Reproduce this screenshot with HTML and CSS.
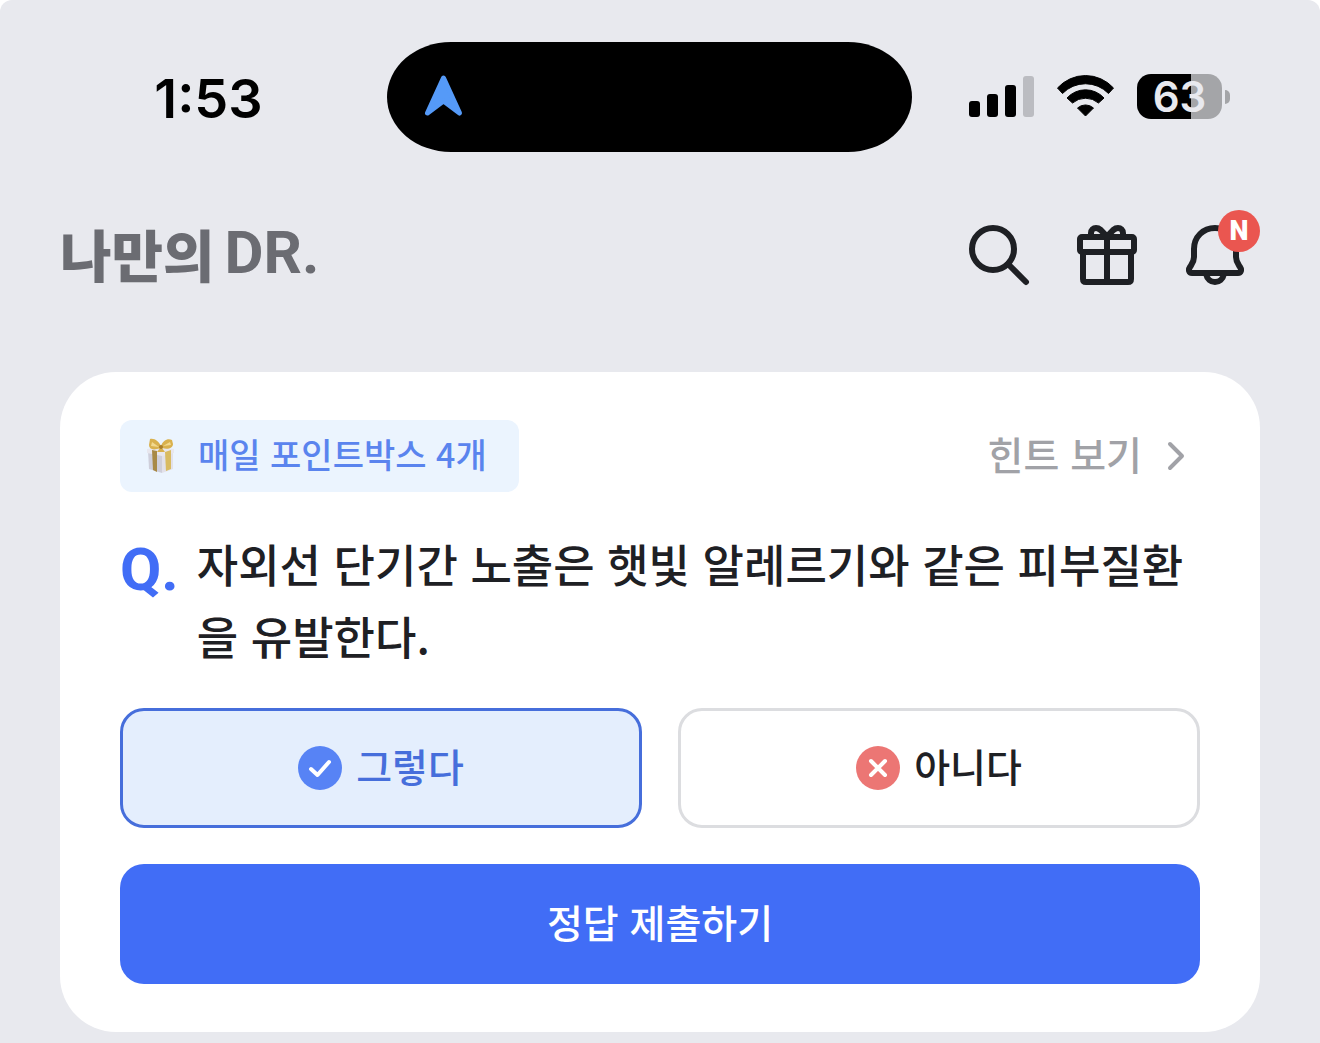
FILE: index.html
```html
<!doctype html>
<html lang="ko">
    <head>
        <meta charset="utf-8" />
        <meta name="viewport" content="width=device-width, initial-scale=1" />
        <title>나만의DR.</title>
        <link rel="stylesheet" href="styles.css">
    </head>
    <body>
        <div class="screen">
            <div class="status-bar">
                <time class="clock">1:53</time>
                <div class="island">
                    <svg width="40" height="44" viewBox="0 0 40 44">
                        <path d="M20.500 4 L4.500 39 L20.500 27 L36.500 39 Z" fill="#559af8" stroke="#559af8" stroke-width="5" stroke-linejoin="round" />
                        <path d="M13 42 L20.500 32 L28 42 Z" fill="#000" />
                    </svg>
                </div>
                <div class="status-icons">
                    <svg width="65" height="45" viewBox="0 0 65 45">
                        <rect x="0" y="27" width="11" height="16" rx="3" />
                        <rect x="18" y="20" width="11" height="23" rx="3" />
                        <rect x="36" y="11" width="11" height="32" rx="3" />
                        <rect x="54" y="2" width="11" height="41" rx="3" fill="#bbbcc1" />
                    </svg>
                    <svg width="57" height="45" viewBox="0 0 57 45">
                        <g stroke="#000" stroke-linejoin="round">
                            <path d="M.5 14 A37.7 37.7 0 0 1 56.5 14 L51.5 19.5 A32 32 0 0 0 5.5 19.5 Z" />
                            <path d="M10 24 A25 25 0 0 1 47 24 L41.5 29 A20 20 0 0 0 15.5 29 Z" />
                            <path d="M20.5 34 A12 12 0 0 1 36.5 34 L28.5 42 Z" />
                        </g>
                    </svg>
                    <span class="battery">63</span>
                </div>
            </div>

            <header class="app-bar">
                <a class="logo" href="#"><span>나만의</span><span class="logo-dr">DR.</span></a>
                <nav class="actions">
                    <button type="button" class="icon-button" aria-label="검색">
                        <svg width="72" height="72" viewBox="0 0 72 72">
                            <circle cx="30" cy="30" r="21" />
                            <path d="M45 45 L63 63" />
                        </svg>
                    </button>
                    <button type="button" class="icon-button" aria-label="선물">
                        <svg width="72" height="72" viewBox="0 0 72 72">
                            <rect x="9" y="18" width="54" height="15" rx="2" />
                            <path d="M12 33 V60 Q12 63 15 63 H57 Q60 63 60 60 V33" />
                            <path d="M36 18 V63" />
                            <path d="M20 17 V14 A5 5 0 0 1 25 9 C29 9 31 12 36 18 C41 12 43 9 47 9 A5 5 0 0 1 52 14 V17" />
                        </svg>
                    </button>
                    <button type="button" class="icon-button" aria-label="알림">
                        <svg width="72" height="72" viewBox="0 0 72 72">
                            <path d="M36 9 C24 9 15 18 15 30 V38 C15 43 13 45 11 48 C9 51 10 54 13 54 H59 C62 54 63 51 61 48 C59 45 57 43 57 38 V30 C57 18 48 9 36 9 Z" />
                            <path d="M27 55 C28 60 32 63 36 63 S44 60 45 55" />
                        </svg>
                        <span class="badge">N</span>
                    </button>
                </nav>
            </header>

            <main>
                <form class="quiz-card">
                    <div class="quiz-top">
                        <div class="point-tag">
                            <svg width="30" height="36" viewBox="0 0 30 36">
                                <path d="M2 12 L16 15 V35 L3 31 Z" fill="#cfcfdb" />
                                <path d="M16 15 L27 12 V31 L16 35 Z" fill="#e2e1ea" />
                                <path d="M1 11 L14 9 L28 11 V15 L16 18 L1 15 Z" fill="#e8e7ee" />
                                <path d="M6 12 L11 13 V34 L7 32 Z" fill="#a88946" />
                                <path d="M19 14 L25 12 V31 L20 33 Z" fill="#d9bb62" />
                                <path d="M14 10 C7 13 3 11 3 7 L4 1 C9 0 13 4 15 8 C17 2 22 0 26 2 L27 6 C27 10 22 12 16 10 L19 14 H11 Z" fill="#d9b14e" />
                                <path d="M6 4 L13 9 L5 8 Z M24 4 L17 8 L25 7 Z" fill="#f2d98f" />
                                <circle cx="15" cy="9" r="2" fill="#a97e2c" />
                            </svg>
                            <span class="caption">매일 포인트박스 4개</span>
                        </div>
                        <a class="hint" href="#">
                            <span class="caption">힌트 보기</span>
                            <svg width="48" height="48" viewBox="0 0 48 48">
                                <path d="M18 12 L30 24 L18 36" />
                            </svg>
                        </a>
                    </div>

                    <div class="question">
                        <span class="question-mark">Q.</span>
                        <p>자외선 단기간 노출은 햇빛 알레르기와 같은 피부질환을 유발한다.</p>
                    </div>

                    <div class="options">
                        <label class="option">
                            <input type="radio" name="answer" value="yes" checked />
                            <svg width="44" height="44" viewBox="0 0 44 44">
                                <circle cx="22" cy="22" r="22" fill="#5783f5" />
                                <path d="M13 23 L19.500 29 L31 16" />
                            </svg>
                            <span class="caption">그렇다</span>
                        </label>
                        <label class="option">
                            <input type="radio" name="answer" value="no" />
                            <svg width="44" height="44" viewBox="0 0 44 44">
                                <circle cx="22" cy="22" r="22" fill="#ec7674" />
                                <path d="M15 15 L29 29 M29 15 L15 29" />
                            </svg>
                            <span class="caption">아니다</span>
                        </label>
                    </div>

                    <button class="submit"><span class="caption">정답 제출하기</span></button>
                </form>
            </main>
        </div>
    </body>
</html>
```
FILE: styles.css
```css
* {
    box-sizing: border-box;
}

body {
    margin: 0;
    background: #fff;
    color: #1e2024;
    font-family: "Noto Sans CJK KR", sans-serif;
    font-size: 39px;
    font-weight: 500;
}

svg {
    display: block;
    flex: none;
}

button {
    padding: 0;
    border: 0;
    font: inherit;
    cursor: pointer;
}

a {
    color: inherit;
    text-decoration: none;
}

.screen {
    min-height: 100vh;
    background: #e8e9ee;
    border-radius: 12px 12px 0 0;
}

/* status bar */
.status-bar {
    display: grid;
    grid-template-columns: 1fr 525px 1fr;
    align-items: center;
    padding: 42px 51px 42px 30px;
    color: #000;
    font-family: Inter, sans-serif;
}

.clock {
    padding-top: 4px;
    text-align: center;
    font-size: 54px;
    font-weight: 600;
    line-height: 60px;
}

.island {
    display: flex;
    align-items: center;
    height: 110px;
    padding: 0 36px 2px;
    background: #000;
    border-radius: 64px / 55px;
}

.status-icons {
    display: flex;
    justify-content: flex-end;
    gap: 23px;
    padding: 0 47px 2px 0;
}

.battery {
    position: relative;
    width: 85px;
    height: 45px;
    background: linear-gradient(to right, #000 54px, #a4a5a8 54px);
    border-radius: 14px;
    color: #e8e9ee;
    font-size: 42px;
    font-weight: 600;
    line-height: 46px;
    text-align: center;
}

.battery::after {
    content: "";
    position: absolute;
    top: 16px;
    right: -8px;
    width: 5px;
    height: 14px;
    background: #a4a5a8;
    border-radius: 0 5px 5px 0;
}

/* app bar */
.app-bar {
    display: flex;
    justify-content: space-between;
    align-items: center;
    height: 122px;
    padding: 0 69px 0 60px;
}

.logo {
    display: flex;
    align-items: center;
    gap: 10px;
    padding-bottom: 4px;
    color: #6b6c72;
    font-size: 56px;
    font-weight: 900;
    line-height: 72px;
}

.logo-dr {
    font-family: Roboto, sans-serif;
    font-size: 60px;
    font-weight: 700;
}

.actions {
    display: flex;
    gap: 36px;
}

.icon-button {
    position: relative;
    background: none;
}

.icon-button svg {
    fill: none;
    stroke: #1e2024;
    stroke-width: 6;
    stroke-linecap: round;
    stroke-linejoin: round;
}

.badge {
    position: absolute;
    top: -9px;
    right: -9px;
    width: 42px;
    height: 42px;
    background: #ea5650;
    border-radius: 50%;
    color: #fff;
    font-family: Roboto, sans-serif;
    font-size: 27px;
    font-weight: 900;
    line-height: 42px;
}

/* quiz */
main {
    padding: 56px 60px 11px;
}

.quiz-card {
    display: flex;
    flex-direction: column;
    gap: 36px;
    padding: 48px 60px;
    background: #fff;
    border-radius: 56px;
}

/* lifts the Hangul to the middle of its row */
.caption {
    padding-bottom: 6px;
}

.quiz-top {
    display: flex;
    justify-content: space-between;
    align-items: center;
}

.point-tag {
    display: flex;
    align-items: center;
    gap: 22px;
    height: 72px;
    padding: 0 32px 0 26px;
    background: #ebf4fe;
    border-radius: 12px;
    color: #5a84ee;
    font-size: 34px;
}

.hint {
    display: flex;
    align-items: center;
    gap: 10px;
    color: #a1a2a7;
    line-height: 60px;
}

.hint svg {
    fill: none;
    stroke: #a1a2a7;
    stroke-width: 4;
    stroke-linecap: round;
    stroke-linejoin: round;
}

.question {
    display: flex;
    gap: 18px;
    font-size: 45px;
    line-height: 72px;
}

.question-mark {
    flex: none;
    padding-top: 6px;
    color: #416df6;
    font-family: Roboto, sans-serif;
    font-size: 60px;
    font-weight: 700;
}

.question p {
    margin: 0;
    word-break: break-all;
}

.options {
    display: grid;
    grid-template-columns: 1fr 1fr;
    gap: 36px;
}

.option {
    position: relative;
    display: flex;
    justify-content: center;
    align-items: center;
    gap: 14px;
    height: 120px;
    border: 3px solid #dcdde0;
    border-radius: 24px;
    cursor: pointer;
}

.option input {
    position: absolute;
    inset: 0;
    margin: 0;
    opacity: 0;
}

.option path {
    fill: none;
    stroke: #fff;
    stroke-width: 4;
    stroke-linecap: round;
    stroke-linejoin: round;
}

.option:has(input:checked) {
    background: #e4eefd;
    border-color: #466edb;
    color: #466edb;
}

.submit {
    display: flex;
    justify-content: center;
    align-items: center;
    height: 120px;
    background: #416df6;
    border-radius: 24px;
    color: #fff;
}
```
